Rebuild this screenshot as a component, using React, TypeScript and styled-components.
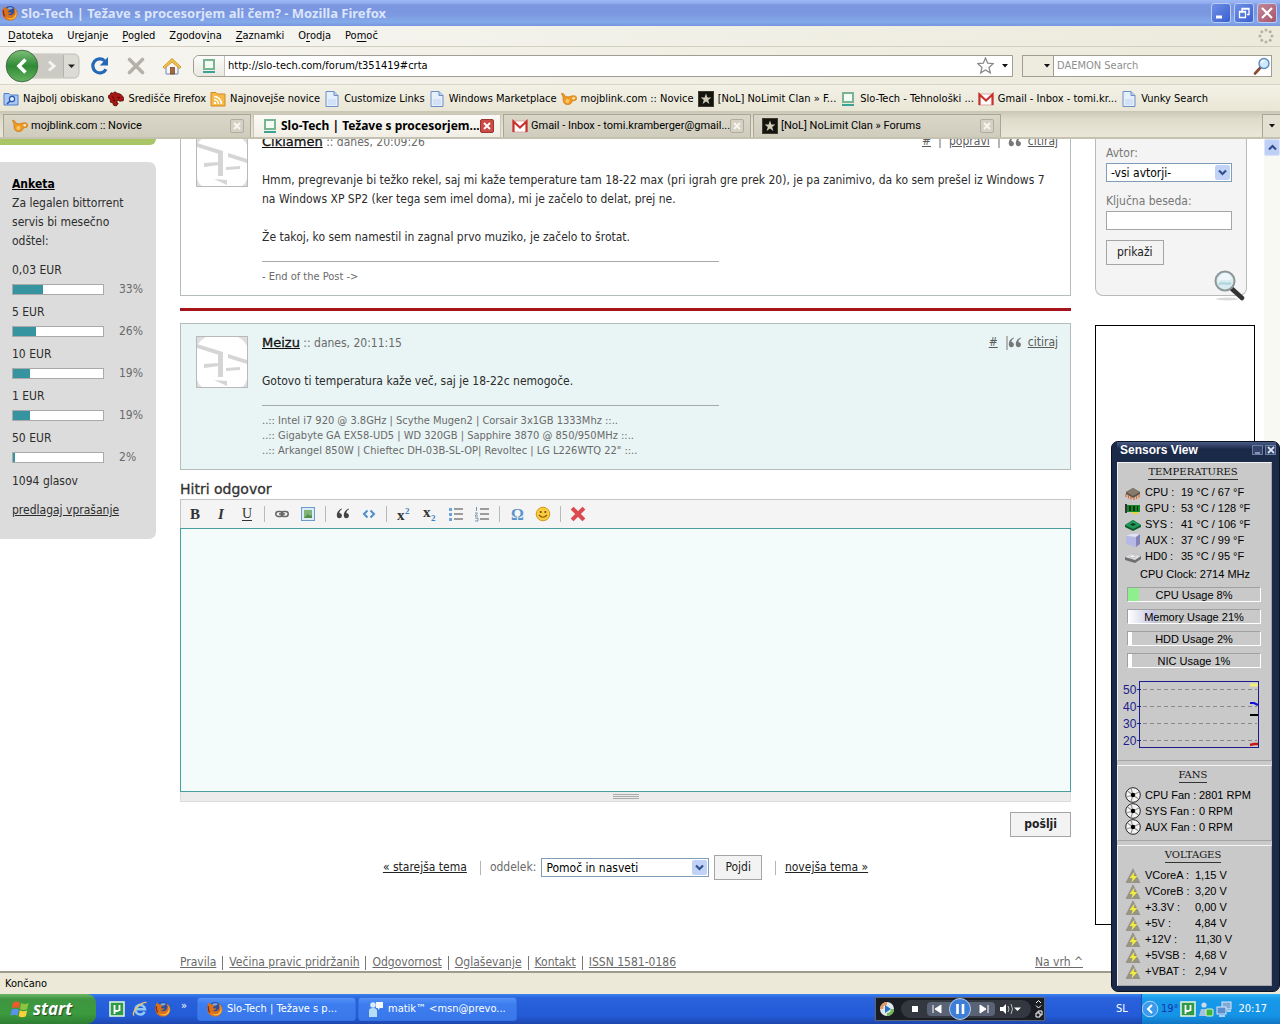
import React from "react";
import styled, { createGlobalStyle, css } from "styled-components";

const ui = `"DejaVu Sans Condensed", "DejaVu Sans", "Noto Sans", sans-serif`;
const uiWide = `"DejaVu Sans", "Noto Sans", sans-serif`;
const uiBold = `"Noto Sans", "Open Sans", sans-serif`;
const arial = `"Liberation Sans", Arial, sans-serif`;

const Global = createGlobalStyle`
  * { box-sizing: border-box; }
  body { margin: 0; background: #fff; overflow: hidden; }
  button, input, select, textarea { font: inherit; color: inherit; }
  svg { display: block; flex: none; }
`;

/* ---------- icons ---------- */

const Firefox = ({ size = 16 }: { size?: number }) => (
  <svg width={size} height={size} viewBox="0 0 16 16">
    <circle cx="8" cy="7.6" r="6.6" fill="#2c4f9e" />
    <path d="M5 3.4C6.500 2 9.500 1.700 11 3c-1 .6-1.600 1.600-3 1.600z" fill="#7fb2ea" />
    <path d="M.8 4C1 2.600 2 1.600 2.400 1.200c0 1 .4 1.600 1.600 1.900 1 .3 2 1 3 1.100.6 0 1 .6.600 1.100-.8.700-1.600.8-1.600 1.600.6 1 2.400.6 3.400.2-.4 1.600-2 2.400-3.600 2.200C8 11 11 10.200 12 7.800c.8-2 .2-4-.9-5.200 3 1 4.600 4 4.200 6.600C14.800 13 11.700 15.600 8 15.600 3.500 15.600.4 12 .4 7.900.4 6.500.5 5.200.8 4z" fill="#d9711c" />
    <path d="M12.400 4c2 2.400 1.900 5.700-.4 7.800-2.200 2-5.700 2-8 .2 1.600 3 6.600 3.400 9.200.6 2.200-2.300 1.700-6.600-.8-8.600z" fill="#f9c440" />
    <path d="M1.200 5c.4 2-.2 4 1.400 6.400" stroke="#8c2a10" strokeWidth="1.200" fill="none" />
  </svg>
);

const SloTech = () => (
  <svg width="16" height="16" viewBox="0 0 16 16">
    <rect x="3" y="2" width="10" height="9" fill="#f3fbf5" stroke="#79b493" strokeWidth="2" />
    <path d="M2 14h12" stroke="#3aa394" strokeWidth="2" />
  </svg>
);

const Page = () => (
  <svg width="16" height="16" viewBox="0 0 16 16">
    <path d="M2 .5h8l4 4v11H2z" fill="#e6effc" stroke="#6f8ec4" />
    <path d="M10 .5v4h4" fill="#b8cff2" stroke="#6f8ec4" />
    <path d="M4 8h8v6H4z" fill="#d3e1f7" />
  </svg>
);

const Gmail = () => (
  <svg width="16" height="16" viewBox="0 0 16 16">
    <rect x="1" y="3" width="14" height="11" fill="#fff" stroke="#d9a8a4" />
    <path d="M1.500 14V3.500L8 9.500l6.500-6V14" fill="none" stroke="#c8322d" strokeWidth="2.200" />
  </svg>
);

const Blink = () => (
  <svg width="16" height="16" viewBox="0 0 16 16">
    <path d="M.5 2.500C2 2 3 3 3.500 4.500 5 6 7 6 9 5.600c3-1.600 7-1 6.700 1.800-.2 2.300-3 2.600-4.200 2-.2 2.200-2 4.200-4.800 4.200-2.700 0-4.700-1.900-4.500-4.600C1.600 7 2.600 6 1.600 5.200z" fill="#ee9a24" stroke="#c8710c" strokeWidth=".7" />
    <circle cx="12.700" cy="7.200" r="1.300" fill="#fde6bd" />
    <circle cx="6.400" cy="10" r="2" fill="#fbc765" />
  </svg>
);

const NolStar = () => (
  <svg width="16" height="16" viewBox="0 0 16 16">
    <rect x=".5" y=".5" width="15" height="15" fill="#15150f" stroke="#3c3b2c" />
    <path d="M8 2.500l1.400 3.900h4L10.200 9l1.200 4L8 10.600 4.600 13l1.200-4L2.600 6.400h4z" fill="#cfcdb9" />
  </svg>
);

const FolderSearch = () => (
  <svg width="16" height="16" viewBox="0 0 16 16">
    <path d="M1 2.500h5l1.500 1.500H15v10H1z" fill="#a9c8f6" stroke="#4f7cc9" />
    <circle cx="9" cy="8" r="2.600" fill="#e7f1ff" stroke="#2c57a8" strokeWidth="1.200" />
    <path d="M7 10l-3 3" stroke="#2c57a8" strokeWidth="1.600" />
  </svg>
);

const Dino = () => (
  <svg width="16" height="16" viewBox="0 0 16 16">
    <path d="M0 5l2-1 1-2.200 2 .4L7 .8l2 1.400c3 .4 6 2 6.800 5.300l-.6 2.300-3.400.4-2.300-1.400-.6 2.200 1.200 1.600-1.800 2.400-2.800-.8-.7-2.400-2.300-.6-.3-2.400L.6 7z" fill="#a81612" stroke="#4d0604" strokeWidth=".8" />
    <path d="M9.500 6.200l2.600.6M4 6l2 1M5 9l2 .6" stroke="#4d0604" strokeWidth="1.100" />
  </svg>
);

const Rss = () => (
  <svg width="16" height="16" viewBox="0 0 16 16">
    <path d="M1 1.500h5l1.500 1.500H15v12H1z" fill="#f6b948" stroke="#d58a1d" />
    <circle cx="5" cy="12" r="1.300" fill="#fff" />
    <path d="M4 8.500a4.500 4.500 0 0 1 4.500 4.500M4 5.500a7.500 7.500 0 0 1 7.500 7.500" stroke="#fff" strokeWidth="1.500" fill="none" />
  </svg>
);

const Glass = ({ size = 18 }: { size?: number }) => (
  <svg width={size} height={size} viewBox="0 0 18 18">
    <path d="M7.500 10.500L2 16.500" stroke="#8a4b32" strokeWidth="2.600" strokeLinecap="round" />
    <circle cx="11" cy="6.500" r="5" fill="#cfe8fb" stroke="#5a8dc0" strokeWidth="1.400" />
    <path d="M8.500 6a2.800 2.800 0 0 1 3-2.500" stroke="#fff" strokeWidth="1.400" fill="none" />
  </svg>
);

const BigGlass = () => (
  <svg width="32" height="32" viewBox="0 0 32 32">
    <ellipse cx="14" cy="29" rx="11" ry="1.500" fill="#dcdcdc" />
    <path d="M18 18l11 10" stroke="#333" strokeWidth="4.500" strokeLinecap="round" />
    <circle cx="12" cy="11" r="9.500" fill="#d8ebef" stroke="#8d9698" strokeWidth="2" />
    <path d="M5 12c3-4 8 0 14-3-1-4-4-6-7-6S5 7 5 12z" fill="#eef8fa" />
    <path d="M6 14c4-2 8 1 12-1" stroke="#a9d5dc" strokeWidth="2" fill="none" />
  </svg>
);

const Reload = () => (
  <svg width="20" height="20" viewBox="0 0 20 20">
    <path d="M16 13.200A7 7 0 1 1 14.600 4.800" fill="none" stroke="#2468b8" strokeWidth="3.200" />
    <path d="M18 1v8.500H9.800z" fill="#2468b8" />
  </svg>
);

const Stop = () => (
  <svg width="20" height="20" viewBox="0 0 20 20">
    <path d="M3.500 3.500l13 13M16.500 3.500l-13 13" stroke="#b3b1a8" strokeWidth="3.600" strokeLinecap="round" />
  </svg>
);

const Home = () => (
  <svg width="20" height="20" viewBox="0 0 20 20">
    <path d="M4 9.500v8.500h12V9.500L10 4z" fill="#f3f5fa" stroke="#7288b4" />
    <path d="M1 11L10 2.500 19 11l-1.500 1.500L10 6l-7.500 6.500z" fill="#f4c24a" stroke="#c58a18" strokeWidth=".8" />
    <rect x="8.500" y="11.500" width="4" height="6.500" fill="#a36a3a" stroke="#6b421d" strokeWidth=".7" />
  </svg>
);

const NavArrows = () => (
  <svg width="76" height="34" viewBox="0 0 76 34">
    <defs>
      <linearGradient id="back" x1="0" y1="0" x2="0" y2="1">
        <stop offset="0" stopColor="#7fc07a" />
        <stop offset=".5" stopColor="#2f8a35" />
        <stop offset="1" stopColor="#64b45e" />
      </linearGradient>
    </defs>
    <path d="M26 5h44q5 0 5 6v12q0 6-5 6H26z" fill="#dcdbd4" stroke="#c0beb4" />
    <path d="M28 6h31v22H28z" fill="#cbcac3" />
    <path d="M59.500 6v22" stroke="#b5b3a9" />
    <circle cx="18" cy="17" r="15.800" fill="url(#back)" stroke="#4b6b48" />
    <path d="M21.500 10.500L15 17l6.500 6.500" fill="none" stroke="#fff" strokeWidth="3.600" />
    <path d="M45 12.500l5 4.500-5 4.500" fill="none" stroke="#f4f3ee" strokeWidth="3" />
    <path d="M64 15.500h7L67.500 19z" fill="#222" />
  </svg>
);

const Throbber = () => (
  <svg width="16" height="16" viewBox="0 0 16 16" fill="#b4b1a5">
    {[[8, 2], [12.200, 3.800], [14, 8], [12.200, 12.200], [8, 14], [3.800, 12.200], [2, 8], [3.800, 3.800]].map(([x, y]) => (
      <circle key={`${x}-${y}`} cx={x} cy={y} r="1.500" />
    ))}
  </svg>
);

const Star = () => (
  <svg width="17" height="17" viewBox="0 0 17 17">
    <path d="M8.500 1l2.200 5.200 5.500.5-4.200 3.700 1.300 5.500-4.800-3-4.800 3L5 10.400.8 6.700l5.500-.5z" fill="#fff" stroke="#8a8a8a" strokeWidth="1.300" />
  </svg>
);

const Caret = () => (
  <svg width="6" height="4" viewBox="0 0 6 4"><path d="M0 0h6L3 3.500z" fill="#111" /></svg>
);

const quotePath = "M5.500 1.500C2 3 .5 6 .8 9a2.600 2.600 0 1 0 2.600-3C3.400 4.500 4.200 3.300 6 2.300zM12.500 1.500C9 3 7.500 6 7.800 9a2.600 2.600 0 1 0 2.600-3c0-1.500.8-2.700 2.600-3.700z";

const Quote = () => (
  <svg width="14" height="14" viewBox="0 0 14 14" fill="#777"><path d={quotePath} /></svg>
);

const AvatarArt = () => (
  <svg width="50" height="50" viewBox="0 0 50 50">
    <rect width="50" height="50" fill="#fff" />
    <path d="M0 0h9Q3 3 0 9zM50 0h-9q6 3 9 9zM0 50v-8q1 5 5 8zM50 50v-8q-1 5-5 8z" fill="#dedede" />
    <path d="M0 7l26 8v3h-4L0 11zM31 17l19 6v4L31 21zM21 15h5v25h-5zM7 27l15-1v3L7 31zM29 31l14-1v3l-14 1zM17 43l13 1v5z" fill="#d5d5d5" />
  </svg>
);

const Chevron = () => (
  <svg width="9" height="7" viewBox="0 0 9 7"><path d="M1 1.500l3.500 3.500L8 1.500" fill="none" stroke="#33508e" strokeWidth="2.200" /></svg>
);

const Torrent = () => (
  <svg width="16" height="16" viewBox="0 0 16 16">
    <rect x="1" y="1" width="14" height="14" fill="#2f9a48" stroke="#d9f0dc" strokeWidth="1.600" />
    <path d="M5.500 13V4M5.500 9q2.500 2.500 5-.5M10.500 4v6" stroke="#fff" strokeWidth="1.800" fill="none" />
  </svg>
);

const Explorer = () => (
  <svg width="16" height="16" viewBox="0 0 16 16">
    <path d="M12.600 10.700A4.800 4.800 0 1 1 13 8.200H4.500" fill="none" stroke="#8fc7f7" strokeWidth="2.600" />
    <path d="M2 14.500C-1 11 9 1 14.500 1.500" fill="none" stroke="#f0c65a" strokeWidth="1.300" />
  </svg>
);

const Messenger = () => (
  <svg width="16" height="16" viewBox="0 0 16 16">
    <circle cx="5" cy="4" r="2.800" fill="#d4ecfb" />
    <path d="M1 16V10q0-3 4-3t4 3v6z" fill="#b8def6" />
    <path d="M8 1h7v6h-3l-2 2V7H8z" fill="#f2f8fd" />
  </svg>
);

const Flag = () => (
  <svg width="20" height="20" viewBox="0 0 20 20">
    <path d="M3 3.500q3-2 7 0L9 9.500q-3-2-7.200 0z" fill="#ea5a2a" />
    <path d="M11 4q4 2 7.500 0L17.300 10q-4 2-7.300 0z" fill="#8cc540" />
    <path d="M1.600 10.700q3.400-2 7.200 0l-1.200 6q-3.600-2-7.200 0z" fill="#5a92ef" />
    <path d="M9.800 11.200q3.500 2 7.300 0l-1.200 6q-3.800 2-7.200 0z" fill="#fbd13a" />
  </svg>
);

const Tray2 = () => (
  <svg width="16" height="16" viewBox="0 0 16 16">
    <circle cx="6" cy="4" r="2.600" fill="#c8dceb" />
    <path d="M1 15l2-7h6l1 7z" fill="#a5c3dc" />
    <rect x="8" y="8" width="7" height="7" rx="1" fill="#3fb63a" stroke="#d8f5d4" />
  </svg>
);

const Tray3 = () => (
  <svg width="16" height="16" viewBox="0 0 16 16">
    <rect x="6" y="1" width="9" height="7" fill="#7fa9d9" stroke="#dbe9f7" />
    <rect x="1" y="6" width="9" height="7" fill="#5c8fce" stroke="#dbe9f7" />
    <path d="M3 15h6M11 10h4" stroke="#dbe9f7" strokeWidth="1.500" />
  </svg>
);

/* ---------- window chrome ---------- */

const Screen = styled.div`
  position: relative;
  height: 100vh;
  display: flex;
  flex-direction: column;
  overflow: hidden;
  font: 11px/14px ${ui};
  color: #000;
`;

const TitleBar = styled.header`
  flex: none;
  height: 26px;
  display: flex;
  align-items: center;
  gap: 3px;
  padding: 0 3px 0 2px;
  background: linear-gradient(#9cb9f6 0, #94aef0 3px, #7b97e0 5px, #7b97e0 14px, #83aaea 22px, #7795e0 26px);
`;

const WindowTitle = styled.h1`
  flex: 1;
  margin: 0;
  font: bold 13px/16px ${uiBold};
  color: #dbe5fb;
`;

const WindowButton = styled.button<{ $close?: boolean }>`
  width: 20px;
  height: 20px;
  padding: 0;
  display: grid;
  place-items: center;
  border: 1px solid #b9ccf4;
  border-radius: 3px;
  background: ${(p) => (p.$close ? "linear-gradient(135deg, #c08a9b, #a8536a)" : "linear-gradient(135deg, #6f8fe6, #3a5fd0)")};
`;

const MenuBar = styled.nav`
  flex: none;
  height: 21px;
  display: flex;
  align-items: center;
  gap: 14px;
  padding: 0 6px 0 8px;
  background: linear-gradient(90deg, #f7f7f4, #eceadb);
  border-bottom: 1px solid #d2cfc0;
`;

const MenuItem = styled.button`
  padding: 0;
  border: 0;
  background: none;
  u { text-underline-offset: 2px; }
`;

const Spacer = styled.span`
  flex: 1;
`;

const NavBar = styled.div`
  flex: none;
  height: 37px;
  display: flex;
  align-items: center;
  padding: 0 8px 0 4px;
  background: linear-gradient(90deg, #f6f5f0, #eceada);
`;

const IconButton = styled.button<{ $gap?: number }>`
  padding: 0;
  margin-left: ${(p) => p.$gap ?? 0}px;
  border: 0;
  background: none;
  display: flex;
  align-items: center;
`;

const UrlBar = styled.div`
  flex: 1;
  height: 22px;
  margin-left: 11px;
  display: flex;
  align-items: center;
  border: 1px solid #a09e92;
  border-radius: 6px 0 0 6px;
  background: #fff;
  padding-right: 4px;
`;

const Identity = styled.span`
  height: 20px;
  width: 31px;
  display: grid;
  place-items: center;
  border-right: 1px solid #c5c3b8;
  border-radius: 6px 0 0 6px;
  background: linear-gradient(#fcfcfa, #e9e8e0);
`;

const BareInput = styled.input`
  flex: 1;
  min-width: 0;
  height: 18px;
  padding: 0 3px;
  border: 0;
  outline: 0;
  background: none;
  &::placeholder { color: #8f8f8f; opacity: 1; }
`;

const UrlTools = styled.span`
  display: flex;
  align-items: center;
  gap: 8px;
`;

const SearchBar = styled.div`
  width: 250px;
  height: 22px;
  margin-left: 9px;
  display: flex;
  align-items: center;
  border: 1px solid #a09e92;
  background: #fff;
`;

const Engine = styled.button`
  width: 31px;
  height: 20px;
  padding: 0 3px 0 0;
  display: flex;
  align-items: center;
  justify-content: flex-end;
  border: 0;
  border-right: 1px solid #a09e92;
  background: #eeecdf;
`;

const Bookmarks = styled.nav`
  flex: none;
  height: 27px;
  display: flex;
  align-items: center;
  gap: 4px;
  padding: 2px 3px 0;
  border-top: 1px solid #d8d5c6;
  background: linear-gradient(#f3f1e6, #e9e6d6);
`;

const Bookmark = styled.a`
  display: flex;
  align-items: center;
  gap: 4px;
  color: #000;
  text-decoration: none;
  white-space: nowrap;
`;

const TabStrip = styled.div`
  flex: none;
  height: 28px;
  display: flex;
  gap: 2px;
  padding: 3px 0 0 3px;
  background: linear-gradient(#c9c6b6, #dedbcb 8px, #e9e6d8 24px);
  border-bottom: 2px solid #c5c2b2;
`;

const Tab = styled.div<{ $active?: boolean }>`
  width: 248px;
  display: flex;
  align-items: center;
  padding: 0 6px 0 8px;
  border: 1px solid #a9a697;
  border-bottom: 0;
  white-space: nowrap;
  background: linear-gradient(#dad7c9, #cfccbd);
  font-family: Roboto, ${ui};
  ${(p) => p.$active && css`
    font-family: ${uiBold};
    font-size: 12px;
    font-weight: bold;
    background: linear-gradient(#fbfaf6, #f0eee4);
    border-color: #c9c6b8;
  `}
`;

const TabLabel = styled.span`
  flex: 1;
  min-width: 0;
  padding-left: 3px;
`;

const CloseTab = styled.button<{ $active?: boolean }>`
  width: 14px;
  height: 14px;
  padding: 0;
  display: grid;
  place-items: center;
  border: 1px solid ${(p) => (p.$active ? "#9a3530" : "#b0ada0")};
  border-radius: 2px;
  background: ${(p) => (p.$active ? "#cb4b47" : "#d5d2c5")};
  color: ${(p) => (p.$active ? "#fff" : "#f7f6f1")};
`;

const TabList = styled.button`
  width: 18px;
  padding: 0;
  display: grid;
  place-items: center;
  border: 1px solid #a9a697;
  border-width: 1px 0 0 1px;
  background: #e3e0d2;
`;

const X = () => (
  <svg width="8" height="8" viewBox="0 0 8 8"><path d="M1 1l6 6M7 1L1 7" stroke="currentColor" strokeWidth="1.800" /></svg>
);

const StatusBar = styled.footer`
  flex: none;
  height: 23px;
  padding: 4px 5px;
  border-top: 2px solid #9d9b8c;
  background: #ece9d8;
`;

/* ---------- forum page ---------- */

const Viewport = styled.div`
  flex: 1;
  min-height: 0;
  display: flex;
  background: #fff;
`;

const Site = styled.div`
  flex: 1;
  min-width: 0;
  min-height: 0;
  display: flex;
  align-items: flex-start;
  gap: 24px;
  overflow: hidden;
  padding-right: 9px;
  font: 12px/19px ${ui};
  color: #2c2c2c;
`;

const ScrollTrack = styled.div`
  width: 16px;
  background: #f9f9f3;
`;

const ScrollUp = styled.button`
  width: 16px;
  height: 17px;
  padding: 0;
  display: grid;
  place-items: center;
  border: 1px solid #dbe4f8;
  border-radius: 2px;
  background: #bfd0f6;
  svg { transform: rotate(180deg); }
`;

const LeftColumn = styled.aside`
  width: 156px;
  flex: none;
`;

const GreenEnd = styled.div`
  height: 6px;
  border-radius: 0 0 6px 0;
  background: #a9c565;
`;

const Poll = styled.section`
  margin-top: 17px;
  padding: 13px 10px 19px 12px;
  border-radius: 0 7px 7px 0;
  background: #dcdcdc;
  a { color: inherit; }
  p { margin: 0; }
`;

const PollTitle = styled.h2`
  margin: 0;
  font: bold 12px/19px ${ui};
  color: #000;
  text-decoration: underline;
`;

const Options = styled.div`
  margin: 10px 0 5px;
  display: grid;
  gap: 4px;
`;

const PollBarRow = styled.div`
  display: flex;
  align-items: center;
  gap: 15px;
  color: #6a6a6a;
`;

const PollBar = styled.div`
  width: 92px;
  height: 11px;
  border: 1px solid #aaa;
  background: #fff;
`;

const PollFill = styled.div`
  height: 9px;
  background: #35949f;
`;

const PollCount = styled.p`
  && { margin-bottom: 10px; }
`;

const Main = styled.main`
  flex: 1;
  min-width: 0;
  margin-top: -17px;
`;

const Post = styled.article<{ $fresh?: boolean }>`
  display: flex;
  align-items: flex-start;
  gap: 14px;
  padding: 9px 12px 11px 15px;
  border: 1px solid #b5bcbc;
  background: ${(p) => (p.$fresh ? "#e9f5f5" : "#fff")};
`;

const Avatar = styled.div`
  margin-top: 3px;
  border: 1px solid #b9b9b9;
`;

const PostBody = styled.div`
  flex: 1;
  min-width: 0;
`;

const PostHead = styled.header`
  display: flex;
  align-items: center;
  justify-content: space-between;
  height: 19px;
  margin-bottom: 20px;
  color: #6a6a6a;
`;

const Author = styled.a`
  font-family: ${uiWide};
  font-size: 13px;
  color: #111;
  -webkit-text-stroke: 0.3px #111;
`;

const Actions = styled.div`
  display: flex;
  align-items: center;
  gap: 8px;
  a { color: #5a5a5a; }
`;

const Cite = styled.span<{ $ruled?: boolean }>`
  display: flex;
  align-items: center;
  gap: 6px;
  ${(p) => p.$ruled && css`
    svg { border-left: 2px solid #b5b5b5; width: 16px; }
  `}
`;

const Rule = styled.span`
  width: 2px;
  height: 12px;
  background: #b5b5b5;
`;

const Text = styled.p`
  margin: 0 0 19px;
  &:last-of-type { margin-bottom: 14px; }
`;

const Signature = styled.div`
  border-top: 1px solid #a5abab;
  width: 457px;
  padding-top: 7px;
  font: 11px/15px ${ui};
  color: #6a6a6a;
  white-space: pre-line;
`;

const Divider = styled.hr`
  height: 3px;
  margin: 12px 0;
  border: 0;
  background: #a8141c;
`;

const ReplyTitle = styled.label`
  display: block;
  margin-top: 10px;
  font-family: ${uiWide};
  font-size: 14px;
  color: #333;
  -webkit-text-stroke: 0.3px #333;
`;

const Toolbar = styled.div`
  height: 29px;
  display: flex;
  align-items: center;
  padding: 0 1px;
  border: 1px solid #c5c5c5;
  border-bottom: 0;
  background: #f4f4f4;
`;

const Tool = styled.button`
  width: 26px;
  height: 24px;
  padding: 0;
  border: 0;
  display: grid;
  place-items: center;
  background: none;
`;

const ToolRule = styled.span`
  width: 1px;
  height: 16px;
  margin: 0 4px;
  background: #b9b9b9;
`;

const Reply = styled.textarea`
  display: block;
  width: 100%;
  height: 264px;
  border: 1px solid #4a9d9d;
  outline: 0;
  resize: none;
  background: #f3fbfb;
`;

const Grip = styled.div`
  height: 10px;
  display: grid;
  place-items: center;
  border: 1px solid #dcdcdc;
  border-top: 0;
  background: #ececec;
`;

const Button = styled.button<{ $strong?: boolean }>`
  height: 25px;
  padding: 0 10px;
  border: 1px solid #a5a5a5;
  background: #f3f3f3;
  color: #222;
  ${(p) => p.$strong && css`
    padding: 0 13px;
    font-weight: bold;
  `}
`;

const SubmitRow = styled.div`
  display: flex;
  justify-content: flex-end;
  margin-top: 10px;
`;

const TopicNav = styled.form`
  margin-top: 18px;
  display: flex;
  align-items: center;
  justify-content: center;
  gap: 5px;
  a { color: #222; }
  label { color: #6a6a6a; }
`;

const TopicRule = styled.span`
  width: 1px;
  height: 14px;
  margin: 0 4px 0 8px;
  background: #b5b5b5;
`;

const SelectBox = styled.span<{ $width: number }>`
  position: relative;
  width: ${(p) => p.$width}px;
`;

const Select = styled.select`
  display: block;
  width: 100%;
  height: 19px;
  padding: 0 20px 0 4px;
  border: 1px solid #7f9db9;
  border-radius: 0;
  appearance: none;
  background: #fff;
  color: #000;
  font-size: 12px;
`;

const SelectArrow = styled.span`
  position: absolute;
  top: 2px;
  right: 2px;
  width: 15px;
  height: 15px;
  display: grid;
  place-items: center;
  border-radius: 2px;
  background: #c1d2f7;
  pointer-events: none;
`;

const FooterRow = styled.footer`
  margin-top: 73px;
  display: flex;
  align-items: center;
  gap: 6px;
  a { color: #6a6a6a; }
`;

const FooterTop = styled.a`
  margin: 0 -12px 0 auto;
`;

const FooterRule = styled.span`
  width: 1px;
  height: 14px;
  background: #777;
`;

const RightColumn = styled.aside`
  width: 160px;
  flex: none;
`;

const SearchCard = styled.form`
  position: relative;
  width: 152px;
  height: 157px;
  padding: 5px 10px 0;
  display: flex;
  flex-direction: column;
  align-items: flex-start;
  border: 1px solid #b9b9b9;
  border-top: 0;
  border-radius: 0 0 8px 8px;
  background: #f4f4f4;
  color: #777;
`;

const Keyword = styled.input`
  width: 126px;
  height: 19px;
  margin-bottom: 10px;
  border: 1px solid #a5a5a5;
  background: #fff;
`;

const CardLabel = styled.label`
  &:not(:first-child) { margin-top: 10px; }
`;

const CardGlass = styled.span`
  position: absolute;
  right: 1px;
  bottom: -7px;
`;

const Ad = styled.div`
  height: 600px;
  margin-top: 29px;
  border: 1px solid #000;
  background: #fff;
`;

/* ---------- sensors window ---------- */

const Sensors = styled.section`
  position: absolute;
  right: 0;
  bottom: 32px;
  width: 169px;
  padding: 0 7px 5px 5px;
  border: 1px solid #0b1222;
  border-radius: 7px;
  background: #1c2a4a;
  font: 11px/16px ${arial};
`;

const SensorsBar = styled.header`
  height: 20px;
  display: flex;
  align-items: center;
  gap: 2px;
  margin-right: -4px;
  padding-bottom: 4px;
  color: #fff;
  background: linear-gradient(#4a5c86, #1c2a4a 7px);
`;

const SensorsTitle = styled.h2`
  flex: 1;
  margin: 0 0 0 3px;
  font: bold 12px/14px ${arial};
  color: #fff;
`;

const SensorsButton = styled.button`
  width: 11px;
  height: 10px;
  padding: 0;
  display: grid;
  place-items: center;
  border: 1px solid #6c7da3;
  background: #33456d;
  color: #dbe2f2;
`;

const SensorsInner = styled.div`
  background: #c9c9c9;
  display: grid;
  gap: 4px;
`;

const Panel = styled.div<{ $bottom: number }>`
  padding: 2px 10px ${(p) => p.$bottom}px 7px;
  border: 1px solid;
  border-color: #f3f3f3 #a5a5a5 #a5a5a5 #f3f3f3;
`;

const PanelTitle = styled.h3`
  margin: 0 auto 4px;
  width: fit-content;
  font: 10px/14px "DejaVu Serif", serif;
  border-bottom: 1px solid #333;
  color: #111;
`;

const Readings = styled.table<{ $label: number }>`
  border-collapse: collapse;
  td, th { padding: 0; height: 16px; line-height: 16px; font-weight: normal; text-align: left; white-space: nowrap; }
  td:first-child { width: 20px; }
  th { width: ${(p) => p.$label}px; }
`;

const Clock = styled.p`
  margin: 2px 0 5px 4px;
  text-align: center;
`;

const Usage = styled.div`
  position: relative;
  height: 15px;
  margin: 0 0 7px 2px;
  border: 1px solid;
  border-color: #a0a0a0 #fff #fff #a0a0a0;
  line-height: 14px;
  text-align: center;
`;

const UsageFill = styled.span<{ $color: string }>`
  position: absolute;
  inset: 0 auto 0 0;
  background: ${(p) => p.$color};
`;

const UsageText = styled.span`
  position: relative;
`;

const ChartBox = styled.div`
  margin: 13px 0 0 -2px;
`;

const Chip = ({ kind }: { kind: string }) => {
  if (kind === "CPU") return (
    <svg width="16" height="16" viewBox="0 0 16 16"><path d="M1 8l7-4 7 4v2l-7 4-7-4z" fill="#5d5248" /><path d="M1 8l7-4 7 4-7 4z" fill="#867a6c" /><path d="M1 10v3M3.500 11.500v3M6 12.500v3M9 13v3M11.500 12v3M14 10.500v3" stroke="#d8672c" strokeWidth="1.200" /></svg>
  );
  if (kind === "GPU") return (
    <svg width="16" height="16" viewBox="0 0 16 16"><path d="M0 4h2v9H0z" fill="#333" /><path d="M2 5h13v7H2z" fill="#17852a" /><path d="M4 6h2v5H4zM8 6h2v5H8zM12 6h1v5h-1z" fill="#063a0e" /><path d="M7 12h6v2H7z" fill="#e3d33e" /></svg>
  );
  if (kind === "SYS") return (
    <svg width="16" height="16" viewBox="0 0 16 16"><path d="M0 9l8-5 8 5v2l-8 4-8-4z" fill="#0c5a2c" /><path d="M0 9l8-5 8 5-8 4z" fill="#23965a" /><path d="M5 8.500L8 7l3 1.500L8 10z" fill="#0b3f20" /></svg>
  );
  if (kind === "AUX") return (
    <svg width="16" height="16" viewBox="0 0 16 16"><path d="M1 4l5-2h9l-4 3z" fill="#e2e2f6" /><path d="M1 4l10 1v10L1 12z" fill="#b8b8e4" /><path d="M11 5l4-3v10l-4 3z" fill="#8484b8" /></svg>
  );
  return (
    <svg width="16" height="16" viewBox="0 0 16 16"><path d="M0 9l6-4 10 3v3l-6 4-10-3z" fill="#6f6f74" /><path d="M0 9l6-4 10 3-6 4z" fill="#dedee2" /><ellipse cx="7.500" cy="8.300" rx="3" ry="1.300" fill="#fff" stroke="#999" strokeWidth=".6" /></svg>
  );
};

const Fan = () => (
  <svg width="16" height="16" viewBox="0 0 16 16">
    <circle cx="8" cy="8" r="7.300" fill="#f3f3f3" stroke="#222" />
    <path d="M8 8L6 1.500M8 8l6-3M8 8l5.500 4M8 8l-2 6.500M8 8L1.500 10M8 8L2.500 4" stroke="#999" strokeWidth="1.200" />
    <circle cx="8" cy="8" r="2.200" fill="#000" />
  </svg>
);

const Bolt = () => (
  <svg width="16" height="16" viewBox="0 0 16 16">
    <path d="M8 1l7.500 15H.5z" fill="#96938a" />
    <path d="M9.500 4.500L4.500 11h3L6.500 15.500l6-6.500H8.800z" fill="#f3ec3c" />
  </svg>
);

const chartTicks = [[50, 9], [40, 26], [30, 43], [20, 60]];

const Chart = () => (
  <svg width="137" height="67" viewBox="0 0 137 67" fontFamily={arial} fontSize="12" fill="#20208a">
    <rect x="16.500" y=".5" width="119" height="66" fill="none" stroke="#1b1b8c" />
    {chartTicks.map(([t, y]) => (
      <g key={t}>
        <text x="0" y={y + 4}>{t}</text>
        <path d={`M14 ${y - 0.5}h4`} stroke="#1b1b8c" />
        <path d={`M20 ${y - 0.5}h114`} stroke="#8a8a8a" strokeDasharray="4 3" />
      </g>
    ))}
    <path d="M127 4h8" stroke="#eef07a" strokeWidth="3" />
    <path d="M127 22h4l4 2" stroke="#1010d8" strokeWidth="2" fill="none" />
    <path d="M127 34h8" stroke="#000" strokeWidth="2" />
    <path d="M127 64l4-1h4" stroke="#c41a14" strokeWidth="2.500" fill="none" />
  </svg>
);

/* ---------- taskbar ---------- */

const TaskBar = styled.footer`
  flex: none;
  height: 30px;
  display: flex;
  align-items: center;
  background: linear-gradient(#3a83f0 0, #2a62dc 4px, #235bd8 22px, #1d47ad 30px);
  color: #fff;
`;

const Start = styled.button`
  width: 96px;
  height: 30px;
  display: flex;
  align-items: center;
  gap: 3px;
  padding: 0 0 0 10px;
  border: 0;
  border-radius: 0 9px 9px 0;
  background: linear-gradient(#6db567 0, #3e9640 5px, #3b9a3e 20px, #2e7d32 30px);
  color: #fff;
  font: italic bold 17px/20px "Open Sans", "Noto Sans", sans-serif;
  text-shadow: 1px 1px 1px #244f26;
`;

const Quick = styled.div`
  display: flex;
  align-items: center;
  gap: 7px;
  margin-left: 13px;
`;

const More = styled.span`
  width: 19px;
  padding-left: 3px;
  line-height: 10px;
  align-self: flex-start;
`;

const Task = styled.button`
  width: 159px;
  height: 24px;
  margin-right: 2px;
  padding: 0 8px 0 9px;
  display: flex;
  align-items: center;
  gap: 4px;
  border: 1px solid #3372e0;
  border-radius: 3px;
  background: linear-gradient(#5592f7, #3c7df0 6px, #3a78ea);
  color: #fff;
  white-space: nowrap;
`;

const Media = styled.div`
  height: 24px;
  margin-left: auto;
  border: 1px solid #5e6470;
`;

const Language = styled.span`
  margin-left: 71px;
  width: 25px;
`;

const Tray = styled.div`
  height: 30px;
  display: flex;
  align-items: center;
  gap: 2px;
  padding: 0 13px 0 0;
  border-left: 1px solid #1850b0;
  background: linear-gradient(#2fb5f6 0, #1899ea 5px, #1593e6 22px, #1074c4 30px);
`;

const Degrees = styled.span`
  color: #1034a8;
`;

const Time = styled.span`
  margin-left: 4px;
`;

/* ---------- data ---------- */

const bookmarks: [React.ReactNode, string][] = [
  [<FolderSearch />, "Najbolj obiskano"],
  [<Dino />, "Središče Firefox"],
  [<Rss />, "Najnovejše novice"],
  [<Page />, "Customize Links"],
  [<Page />, "Windows Marketplace"],
  [<Blink />, "mojblink.com :: Novice"],
  [<NolStar />, "[NoL] NoLimit Clan » F..."],
  [<SloTech />, "Slo-Tech - Tehnološki ..."],
  [<Gmail />, "Gmail - Inbox - tomi.kr..."],
  [<Page />, "Vunky Search"],
];

const tabs: [React.ReactNode, string, boolean][] = [
  [<Blink />, "mojblink.com :: Novice", false],
  [<SloTech />, "Slo-Tech | Težave s procesorjem...", true],
  [<Gmail />, "Gmail - Inbox - tomi.kramberger@gmail...", false],
  [<NolStar />, "[NoL] NoLimit Clan » Forums", false],
];

const menu: [string, string, string][] = [
  ["", "D", "atoteka"],
  ["Ur", "e", "janje"],
  ["", "P", "ogled"],
  ["Zgodov", "i", "na"],
  ["", "Z", "aznamki"],
  ["O", "r", "odja"],
  ["Po", "m", "oč"],
];

const poll: [string, number][] = [["0,03 EUR", 33], ["5 EUR", 26], ["10 EUR", 19], ["1 EUR", 19], ["50 EUR", 2]];

const footerLinks = ["Pravila", "Večina pravic pridržanih", "Odgovornost", "Oglaševanje", "Kontakt", "ISSN 1581-0186"];

const temps = [["CPU", "19 °C / 67 °F"], ["GPU", "53 °C / 128 °F"], ["SYS", "41 °C / 106 °F"], ["AUX", "37 °C / 99 °F"], ["HD0", "35 °C / 95 °F"]];
const fans = [["CPU Fan", "2801 RPM"], ["SYS Fan", "0 RPM"], ["AUX Fan", "0 RPM"]];
const volts = [["VCoreA", "1,15 V"], ["VCoreB", "3,20 V"], ["+3.3V", "0,00 V"], ["+5V", "4,84 V"], ["+12V", "11,30 V"], ["+5VSB", "4,68 V"], ["+VBAT", "2,94 V"]];
const usage: [string, number, string][] = [
  ["CPU Usage", 8, "#8df08d"],
  ["Memory Usage", 21, "linear-gradient(90deg, #fff, #c0c0e0)"],
  ["HDD Usage", 2, "#fff"],
  ["NIC Usage", 1, "#fff"],
];

const serif = { fontFamily: "Liberation Serif, serif", fontWeight: "bold", fill: "#333" };

const toolIcons: Record<string, React.ReactNode> = {
  bold: <text x="3" y="13" fontSize="15" {...serif}>B</text>,
  italic: <text x="5" y="13" fontSize="15" {...serif} fontStyle="italic">I</text>,
  underline: <><text x="3" y="12" fontSize="14" {...serif} fontWeight="normal">U</text><path d="M3 14.500h10" stroke="#333" /></>,
  link: <g fill="none" stroke="#666" strokeWidth="1.500"><rect x="1.800" y="5.500" width="7" height="5" rx="2.500" /><rect x="7.200" y="5.500" width="7" height="5" rx="2.500" /><path d="M5 8h6" /></g>,
  image: <><rect x="1.500" y="1.500" width="13" height="13" fill="#dcebf8" stroke="#6c9ccc" /><path d="M4 4h8v8H4z" fill="#7fb377" /><path d="M4 12l4-4 2 2 2-1v3z" fill="#4f8f4a" /></>,
  quote: <path transform="translate(1 1)" fill="#444" d={quotePath} />,
  code: <path d="M6.500 4.500L3 8l3.500 3.500M9.500 4.500L13 8l-3.500 3.500" fill="none" stroke="#4c8fcb" strokeWidth="2" />,
  sup: <><text x="1" y="14" fontSize="15" {...serif}>x</text><text x="9" y="8" fontSize="9" {...serif} fill="#3f82c4">2</text></>,
  sub: <><text x="1" y="11" fontSize="15" {...serif}>x</text><text x="9" y="15" fontSize="9" {...serif} fill="#3f82c4">2</text></>,
  bullets: <><path d="M6 3h9M6 8h9M6 13h9" stroke="#444" strokeWidth="1.200" /><path d="M1 2h3v3H1zM1 7h3v3H1zM1 12h3v3H1z" fill="#6ea3d8" /></>,
  numbers: <><path d="M6 3h9M6 8h9M6 13h9" stroke="#444" strokeWidth="1.200" /><path d="M2.500 1v4M1 7h2.500L1 10h3M1 12h3v3H1" stroke="#7a93b0" fill="none" /></>,
  omega: <text x="2" y="14" fontSize="16" fontFamily="Liberation Serif, serif" fill="#5b93cc" fontWeight="bold">Ω</text>,
  smile: <><circle cx="8" cy="8" r="6.800" fill="#f8cc3c" stroke="#d29820" /><circle cx="5.700" cy="6" r="1" fill="#6a4308" /><circle cx="10.300" cy="6" r="1" fill="#6a4308" /><path d="M4 9q4 4.500 8 0" fill="none" stroke="#8a5a10" strokeWidth="1.200" /></>,
  clear: <path d="M3.500 3.500l9 9M12.500 3.500l-9 9" stroke="#dc4a50" strokeWidth="4" strokeLinecap="square" />,
};

const toolGroups = [
  ["bold", "italic", "underline"],
  ["link", "image"],
  ["quote", "code"],
  ["sup", "sub", "bullets", "numbers"],
  ["omega", "smile"],
  ["clear"],
];

const ReadingTable = ({ rows, label, icon }: { rows: string[][]; label: number; icon: (name: string) => React.ReactNode }) => (
  <Readings $label={label}>
    <tbody>
      {rows.map(([name, value]) => (
        <tr key={name}><td>{icon(name)}</td><th scope="row">{name} :</th><td>{value}</td></tr>
      ))}
    </tbody>
  </Readings>
);

export default function App() {
  return (
    <Screen>
      <Global />
      <TitleBar>
        <Firefox />
        <WindowTitle>Slo-Tech | Težave s procesorjem ali čem? - Mozilla Firefox</WindowTitle>
        <WindowButton aria-label="Minimize"><svg width="12" height="12" viewBox="0 0 12 12"><path d="M1 10h6" stroke="#fff" strokeWidth="3" /></svg></WindowButton>
        <WindowButton aria-label="Restore"><svg width="12" height="12" viewBox="0 0 12 12"><path d="M4 4V1.500h7v6H9M1.500 4.500h6v6h-6zM1 5h7M4 2h7" fill="none" stroke="#fff" strokeWidth="1.300" /></svg></WindowButton>
        <WindowButton aria-label="Close" $close><svg width="12" height="12" viewBox="0 0 12 12"><path d="M1 1l10 10M11 1L1 11" stroke="#fff" strokeWidth="2.200" /></svg></WindowButton>
      </TitleBar>
      <MenuBar>
        {menu.map(([a, key, b]) => (
          <MenuItem key={a + key + b}>{a}<u>{key}</u>{b}</MenuItem>
        ))}
        <Spacer />
        <Throbber />
      </MenuBar>
      <NavBar>
        <IconButton aria-label="Back and forward"><NavArrows /></IconButton>
        <IconButton aria-label="Reload" $gap={10}><Reload /></IconButton>
        <IconButton aria-label="Stop" $gap={16}><Stop /></IconButton>
        <IconButton aria-label="Home" $gap={16}><Home /></IconButton>
        <UrlBar>
          <Identity><SloTech /></Identity>
          <BareInput aria-label="Address" defaultValue="http://slo-tech.com/forum/t351419#crta" />
          <UrlTools><Star /><Caret /></UrlTools>
        </UrlBar>
        <SearchBar>
          <Engine aria-label="Search engine"><Caret /></Engine>
          <BareInput aria-label="Search" placeholder="DAEMON Search" />
          <Glass />
        </SearchBar>
      </NavBar>
      <Bookmarks>
        {bookmarks.map(([icon, name]) => (
          <Bookmark key={name} href="#">{icon}{name}</Bookmark>
        ))}
      </Bookmarks>
      <TabStrip>
        {tabs.map(([icon, name, active]) => (
          <Tab key={name} $active={active}>
            {icon}
            <TabLabel>{name}</TabLabel>
            <CloseTab aria-label="Close tab" $active={active}><X /></CloseTab>
          </Tab>
        ))}
        <Spacer />
        <TabList aria-label="List all tabs"><Caret /></TabList>
      </TabStrip>

      <Viewport>
        <Site>
          <LeftColumn>
            <GreenEnd />
            <Poll>
              <PollTitle>Anketa</PollTitle>
              <p>Za legalen bittorrent servis bi mesečno odštel:</p>
              <Options>
                {poll.map(([name, share]) => (
                  <div key={name}>
                    <div>{name}</div>
                    <PollBarRow>
                      <PollBar><PollFill style={{ width: `${share}%` }} /></PollBar>
                      {share}%
                    </PollBarRow>
                  </div>
                ))}
              </Options>
              <PollCount>1094 glasov</PollCount>
              <a href="#">predlagaj vprašanje</a>
            </Poll>
          </LeftColumn>

          <Main>
            <Post>
              <Avatar><AvatarArt /></Avatar>
              <PostBody>
                <PostHead>
                  <span><Author href="#">Ciklamen</Author> :: danes, 20:09:26</span>
                  <Actions>
                    <a href="#">#</a><Rule /><a href="#">popravi</a><Rule />
                    <Cite><Quote /><a href="#">citiraj</a></Cite>
                  </Actions>
                </PostHead>
                <Text>Hmm, pregrevanje bi težko rekel, saj mi kaže temperature tam 18-22 max (pri igrah gre prek 20), je pa zanimivo, da ko sem prešel iz Windows 7 na Windows XP SP2 (ker tega sem imel doma), mi je začelo to delat, prej ne.</Text>
                <Text>Že takoj, ko sem namestil in zagnal prvo muziko, je začelo to šrotat.</Text>
                <Signature>- End of the Post -&gt;</Signature>
              </PostBody>
            </Post>
            <Divider />
            <Post $fresh>
              <Avatar><AvatarArt /></Avatar>
              <PostBody>
                <PostHead>
                  <span><Author href="#">Meizu</Author> :: danes, 20:11:15</span>
                  <Actions>
                    <a href="#">#</a>
                    <Cite $ruled><Quote /><a href="#">citiraj</a></Cite>
                  </Actions>
                </PostHead>
                <Text>Gotovo ti temperatura kaže več, saj je 18-22c nemogoče.</Text>
                <Signature>{`..:: Intel i7 920 @ 3.8GHz | Scythe Mugen2 | Corsair 3x1GB 1333Mhz ::..
                  ..:: Gigabyte GA EX58-UD5 | WD 320GB | Sapphire 3870 @ 850/950MHz ::..
                  ..:: Arkangel 850W | Chieftec DH-03B-SL-OP| Revoltec | LG L226WTQ 22" ::..`}</Signature>
              </PostBody>
            </Post>

            <ReplyTitle htmlFor="reply">Hitri odgovor</ReplyTitle>
            <Toolbar>
              {toolGroups.map((group, i) => (
                <React.Fragment key={group[0]}>
                  {i > 0 && <ToolRule />}
                  {group.map((name) => (
                    <Tool key={name} aria-label={name}><svg width="16" height="16" viewBox="0 0 16 16">{toolIcons[name]}</svg></Tool>
                  ))}
                </React.Fragment>
              ))}
            </Toolbar>
            <Reply id="reply" />
            <Grip><svg width="26" height="6" viewBox="0 0 26 6"><path d="M0 .5h26M0 2.500h26M0 4.500h26" stroke="#aaa" /></svg></Grip>
            <SubmitRow><Button $strong>pošlji</Button></SubmitRow>
            <TopicNav>
              <a href="#">« starejša tema</a>
              <TopicRule />
              <label htmlFor="section">oddelek:</label>
              <SelectBox $width={168}>
                <Select id="section"><option>Pomoč in nasveti</option></Select>
                <SelectArrow><Chevron /></SelectArrow>
              </SelectBox>
              <Button type="button">Pojdi</Button>
              <TopicRule />
              <a href="#">novejša tema »</a>
            </TopicNav>
            <FooterRow>
              {footerLinks.map((name, i) => (
                <React.Fragment key={name}>
                  {i > 0 && <FooterRule />}
                  <a href="#">{name}</a>
                </React.Fragment>
              ))}
              <FooterTop href="#">Na vrh ^</FooterTop>
            </FooterRow>
          </Main>

          <RightColumn>
            <SearchCard>
              <CardLabel htmlFor="author">Avtor:</CardLabel>
              <SelectBox $width={126}>
                <Select id="author"><option>-vsi avtorji-</option></Select>
                <SelectArrow><Chevron /></SelectArrow>
              </SelectBox>
              <CardLabel htmlFor="keyword">Ključna beseda:</CardLabel>
              <Keyword id="keyword" />
              <Button type="button">prikaži</Button>
              <CardGlass><BigGlass /></CardGlass>
            </SearchCard>
            <Ad />
          </RightColumn>
        </Site>
        <ScrollTrack>
          <ScrollUp aria-label="Scroll up"><Chevron /></ScrollUp>
        </ScrollTrack>
      </Viewport>

      <StatusBar>Končano</StatusBar>

      <TaskBar>
        <Start><Flag />start</Start>
        <Quick><Torrent /><Explorer /><Firefox /><More>»</More></Quick>
        <Task><Firefox />Slo-Tech | Težave s p...</Task>
        <Task><Messenger />matik™ &lt;msn@prevo...</Task>
        <Media>
          <svg width="168" height="22" viewBox="0 0 168 22">
            <rect width="168" height="22" fill="#1a1d24" />
            <circle cx="11" cy="11" r="7" fill="#dfe8ee" />
            <path d="M4 11a7 7 0 0 1 7-7v3a4 4 0 0 0-4 4z" fill="#e5985a" />
            <path d="M11 18a7 7 0 0 0 7-7h-3a4 4 0 0 1-4 4z" fill="#6fb84e" />
            <path d="M9 7l6 4-6 4z" fill="#2a6fc0" />
            <rect x="25" y="2" width="130" height="18" rx="9" fill="#33373f" />
            <rect x="51" y="4" width="68" height="14" rx="4" fill="#5a6275" />
            <rect x="36" y="8" width="6" height="6" fill="#fff" />
            <path d="M57 7v8M65 7l-6 4 6 4z" stroke="#fff" fill="#fff" />
            <path d="M112 7v8M104 7l6 4-6 4z" stroke="#fff" fill="#fff" />
            <circle cx="84" cy="11" r="10.500" fill="#3f7ed6" stroke="#b5cdf0" />
            <path d="M81.500 6v10M87 6v10" stroke="#fff" strokeWidth="2.600" />
            <path d="M124 9h3l3-3v10l-3-3h-3z" fill="#fff" />
            <path d="M132 8q2 3 0 6M135 6q3 5 0 10" stroke="#bbb" fill="none" />
            <path d="M138 9.500h7l-3.500 3.500z" fill="#fff" />
            <path d="M160 5l2.500-2.500L165 5M160 7.500l2.500 2.500 2.500-2.500M160 15h4v4h-4zM162 15v-2h4v4h-2" stroke="#fff" fill="none" />
          </svg>
        </Media>
        <Language>SL</Language>
        <Tray>
          <svg width="17" height="18" viewBox="0 0 17 18"><circle cx="8" cy="9" r="7.800" fill="#3b9aec" stroke="#a9d4f8" /><path d="M10 5L6 9l4 4" fill="none" stroke="#fff" strokeWidth="2" /></svg>
          <Degrees>19°</Degrees>
          <Torrent /><Tray2 /><Tray3 />
          <Time>20:17</Time>
        </Tray>
      </TaskBar>

      <Sensors>
        <SensorsBar>
          <SensorsTitle>Sensors View</SensorsTitle>
          <SensorsButton aria-label="Minimize sensors"><svg width="7" height="7" viewBox="0 0 7 7"><path d="M1 6h5" stroke="currentColor" /></svg></SensorsButton>
          <SensorsButton aria-label="Close sensors"><X /></SensorsButton>
        </SensorsBar>
        <SensorsInner>
          <Panel $bottom={12}>
            <PanelTitle>TEMPERATURES</PanelTitle>
            <ReadingTable rows={temps} label={36} icon={(name) => <Chip kind={name} />} />
            <Clock>CPU Clock: 2714 MHz</Clock>
            {usage.map(([name, value, color]) => (
              <Usage key={name}>
                <UsageFill $color={color} style={{ width: `${Math.max(value, 3)}%` }} />
                <UsageText>{name} {value}%</UsageText>
              </Usage>
            ))}
            <ChartBox><Chart /></ChartBox>
          </Panel>
          <Panel $bottom={5}>
            <PanelTitle>FANS</PanelTitle>
            <ReadingTable rows={fans} label={54} icon={() => <Fan />} />
          </Panel>
          <Panel $bottom={6}>
            <PanelTitle>VOLTAGES</PanelTitle>
            <ReadingTable rows={volts} label={50} icon={() => <Bolt />} />
          </Panel>
        </SensorsInner>
      </Sensors>
    </Screen>
  );
}
